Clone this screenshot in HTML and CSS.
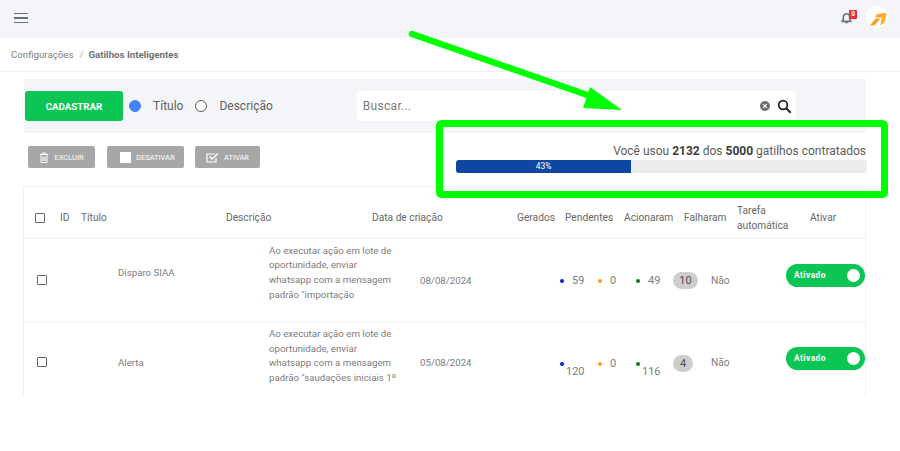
FILE: index.html
```
<!DOCTYPE html>
<html lang="pt-BR">
<head>
<meta charset="utf-8">
<title>Gatilhos Inteligentes</title>
<link rel="stylesheet" href="styles.css">
</head>
<body>
<header class="topbar">
  <span class="menu"><i></i><i></i><i></i></span>
  <div class="top-actions">
    <span class="bell">
      <svg width="11" height="12" viewBox="0 0 14 14"><path d="M7 1.500a4 4 0 0 0-4 4v3L1.500 10.500v.8h11v-.8L11 8.500v-3a4 4 0 0 0-4-4z" fill="none" stroke="#6d7278" stroke-width="2"/><circle cx="7" cy="12.400" r="1.500" fill="#6d7278"/></svg>
      <b class="badge">0</b>
    </span>
    <span class="brand">
      <svg width="22" height="22" viewBox="0 0 22 22"><circle cx="11" cy="11" r="11" fill="#fff"/><path d="M10.500 8.200L20.500 6.800 18.600 16.500 14.200 19.500 15.800 11.600H9z" fill="#fbae2e"/><path d="M4 19.200L9.600 12.500H14.600L8.400 19.600z" fill="#f79f1f"/></svg>
    </span>
  </div>
</header>

<nav class="crumbs">
  <span>Configurações</span><span class="sep">/</span><strong>Gatilhos Inteligentes</strong>
</nav>

<main class="content">
  <section class="filters">
    <button class="primary">CADASTRAR</button>
    <div class="radios">
      <span class="radio on"></span><span class="radio-label">Título</span>
      <span class="radio"></span><span class="radio-label">Descrição</span>
    </div>
    <div class="search">
      <span class="placeholder">Buscar...</span>
      <svg class="clear" width="10" height="10" viewBox="0 0 10 10"><circle cx="5" cy="5" r="5" fill="#6e6e6e"/><path d="M3.200 3.200l3.600 3.600M6.800 3.200l-3.600 3.600" stroke="#fff" stroke-width="1.200"/></svg>
      <svg class="lens" width="15" height="15" viewBox="0 0 15 15"><circle cx="6" cy="6" r="4.300" fill="none" stroke="#222" stroke-width="1.700"/><path d="M9.200 9.200l4.500 4.500" stroke="#222" stroke-width="2"/></svg>
    </div>
  </section>

  <section class="actions">
    <div class="bulk">
      <button class="muted btn-excluir">
        <svg width="10" height="11" viewBox="0 0 10 11"><path d="M1 2.500h8M3.500 2.500V1h3v1.500M2 3.500v7h6v-7" fill="none" stroke="#fff" stroke-width="1"/><path d="M4 4.500v4.500M6 4.500v4.500" stroke="#fff"/></svg>
        EXCLUIR
      </button>
      <button class="muted btn-desativar"><span class="square"></span>DESATIVAR</button>
      <button class="muted btn-ativar">
        <svg width="13" height="11" viewBox="0 0 13 11"><path d="M10 6v4H1V2h8" fill="none" stroke="#fff" stroke-width="1.200"/><path d="M3.500 4.500l2.500 2.500 6-5.500" fill="none" stroke="#fff" stroke-width="1.500"/></svg>
        ATIVAR
      </button>
    </div>
    <div class="usage">
      <p>Você usou <b>2132</b> dos <b>5000</b> gatilhos contratados</p>
      <div class="track"><div class="fill" style="width:42.600%">43%</div></div>
    </div>
  </section>

  <section class="panel">
    <div class="head">
      <span class="box"></span>
      <span>ID</span>
      <span>Título</span>
      <span>Descrição</span>
      <span>Data de criação</span>
      <span>Gerados</span>
      <span>Pendentes</span>
      <span>Acionaram</span>
      <span>Falharam</span>
      <span class="wrap">Tarefa automática</span>
      <span class="last">Ativar</span>
    </div>

    <div class="row">
      <span class="box"></span>
      <span class="name">Disparo SIAA</span>
      <p class="desc">Ao executar ação em lote de oportunidade, enviar whatsapp com a mensagem padrão "importação</p>
      <span class="date">08/08/2024</span>
      <div class="counts">
        <span class="count c-pend"><i class="dot blue"></i>59</span>
        <span class="count c-zero"><i class="dot orange"></i>0</span>
        <span class="count c-acio"><i class="dot green"></i>49</span>
      </div>
      <span class="pill">10</span>
      <span class="no">Não</span>
      <span class="toggle">Ativado<i></i></span>
    </div>

    <div class="row second">
      <span class="box"></span>
      <span class="name">Alerta</span>
      <p class="desc">Ao executar ação em lote de oportunidade, enviar whatsapp com a mensagem padrão "saudações iniciais 1º</p>
      <span class="date">05/08/2024</span>
      <div class="counts">
        <span class="count c-pend stacked"><i class="dot blue"></i>120</span>
        <span class="count c-zero"><i class="dot orange"></i>0</span>
        <span class="count c-acio stacked"><i class="dot green"></i>116</span>
      </div>
      <span class="pill round">4</span>
      <span class="no">Não</span>
      <span class="toggle">Ativado<i></i></span>
    </div>
  </section>
</main>

<!-- Callout drawn over the page: arrow pointing down to the usage frame -->
<svg class="callout" width="900" height="451" viewBox="0 0 900 451">
  <path d="M412 34L596 98" fill="none" stroke="#00ff00" stroke-width="6.500" stroke-linecap="round"/>
  <path d="M590 87L622 110 583 108z" fill="#00ff00"/>
  <rect x="439.500" y="123.500" width="445" height="71" rx="2" fill="none" stroke="#00ff00" stroke-width="7"/>
</svg>
</body>
</html>
```
FILE: styles.css
```
* { box-sizing: border-box; }

html, body { margin: 0; height: 100%; }

body {
  position: relative;
  width: 900px;
  height: 451px;
  overflow: hidden;
  background: #fff;
  font-family: Roboto, "Liberation Sans", sans-serif;
  color: #6f6f6f;
}

button { font-family: inherit; border: 0; cursor: pointer; }

/* top bar */
.topbar {
  height: 38px;
  background: #f3f5f9;
  display: flex;
  align-items: center;
  justify-content: space-between;
  padding: 0 12px 2px 14px;
}

.menu { display: flex; flex-direction: column; gap: 3px; }
.menu i { display: block; width: 14px; height: 1.500px; background: #6b6f75; }

.top-actions { display: flex; align-items: center; gap: 10px; }

.bell { position: relative; display: block; width: 15px; height: 12px; }
.bell svg { display: block; }

.badge {
  position: absolute;
  top: -2px;
  left: 8px;
  width: 8px;
  height: 9px;
  background: #ee2b47;
  border-radius: 1px;
  color: #fff;
  font-size: 6.500px;
  line-height: 9px;
  text-align: center;
}

.brand { display: block; width: 22px; height: 22px; margin-bottom: 2px; }
.brand svg { display: block; }

/* breadcrumb */
.crumbs {
  height: 34px;
  padding: 0 11px;
  display: flex;
  align-items: center;
  font-size: 9.700px;
  color: #7d7d7d;
  border-bottom: 1px solid #f0f0f0;
}
.crumbs .sep { margin: 0 5px 0 6px; color: #a9a9a9; }
.crumbs strong { font-weight: 700; color: #6f6f6f; }

/* page body */
.content { padding: 7px 34px 0 24px; }

/* filter strip */
.filters {
  height: 54px;
  background: #f3f5f9;
  display: flex;
  align-items: center;
}

.primary {
  width: 98px;
  height: 30px;
  margin: 0 0 0 1px;
  background: #0bc655;
  color: #fff;
  border-radius: 3px;
  font-size: 9.700px;
  font-weight: 700;
  padding: 0;
}

.radios { display: flex; align-items: center; margin-left: 6px; font-size: 12px; color: #5f5f5f; }
.radio { width: 12px; height: 12px; border-radius: 50%; border: 1px solid #5b5b5b; background: #fff; }
.radio.on { background: #4483f4; border-color: #4483f4; }
.radio-label { margin: 0 12px 0 12px; }

.search {
  margin-left: 72px;
  width: 439px;
  height: 30px;
  background: #fff;
  display: flex;
  align-items: center;
  padding: 0 4px 0 6px;
  font-size: 12px;
  letter-spacing: .3px;
  color: #7c7c7c;
}
.placeholder { flex: 1; }
.clear { margin-right: 7px; }

/* bulk buttons and usage meter */
.actions {
  display: flex;
  justify-content: space-between;
  height: 53px;
  padding: 13px 0 0 4px;
}

.bulk { display: flex; gap: 12px; height: 22px; }

.muted {
  height: 22px;
  background: #a7a7a7;
  color: #fff;
  border-radius: 2px;
  font-size: 7.500px;
  display: flex;
  align-items: center;
  justify-content: center;
  padding: 0;
  gap: 5px;
}
.btn-excluir { width: 67px; }
.btn-desativar { width: 77px; justify-content: flex-start; padding-left: 13px; gap: 5px; }
.btn-ativar { width: 65px; margin-left: -1px; }
.square { width: 11px; height: 11px; background: #fff; }

.usage { width: 411px; margin-right: -1px; }
.usage p {
  margin: 0 1px 1px 0;
  height: 13px;
  text-align: right;
  font-size: 12px;
  line-height: 10px;
  color: #5c5c5c;
}
.usage b { color: #3c3c3c; }

.track { height: 13px; background: #ececec; border-radius: 3px; overflow: hidden; }
.fill {
  height: 100%;
  background: #0d47a1;
  color: #fff;
  font-size: 8.500px;
  line-height: 13px;
  text-align: center;
}

/* table card */
.panel {
  height: 209px;
  margin-left: -1px;
  border: 1px solid #f0f0f0;
  border-bottom: 0;
  overflow: hidden;
}

.head, .row {
  display: grid;
  align-items: center;
}

.head {
  margin-top: 10px;
  height: 42px;
  padding-left: 11px;
  grid-template-columns: 25px 21px 145px 146px 145px 48px 59px 60px 53px 73px 1fr;
  border-bottom: 1px solid #f5f5f5;
  font-size: 10.200px;
  color: #666;
}
.head .wrap { width: 56px; line-height: 15px; }

.box {
  display: block;
  width: 10px;
  height: 10px;
  border: 1px solid #666;
  border-radius: 1px;
  background: #fff;
}

.row {
  height: 84px;
  padding-left: 13px;
  grid-template-columns: 81px 151px 151px 140px 113px 38px 75px 1fr;
  border-bottom: 1px solid #f5f5f5;
  font-size: 9.700px;
  color: #7c7c7c;
}
.row .box { margin-top: -2px; }
.row .name { margin-top: -16px; }
.row .desc { margin-top: -15px; }
.row .no { font-size: 10.200px; }
.row.second { height: 72px; border-bottom: 0; align-items: start; padding-top: 4px; }
.row.second .box { margin-top: 30px; }
.row.second .name { margin-top: 30px; }
.row.second .desc { margin-top: 0; }
.row.second .date { margin-top: 30px; }
.row.second .counts { margin-top: 30px; }
.row.second .pill { margin-top: 28px; }
.row.second .no { margin-top: 30px; }
.row.second .toggle { margin-top: 20px; }

.desc { margin: 0; width: 128px; line-height: 14.700px; }

.counts { display: flex; align-items: flex-start; position: relative; height: 14px; font-size: 11px; }
.count { position: relative; display: block; white-space: nowrap; padding-left: 12px; line-height: 14px; }
.c-pend { width: 38px; }
.c-zero { width: 38px; }
.c-acio { width: 37px; }
.count.stacked { padding-left: 6px; padding-top: 8px; }
.dot { position: absolute; left: 0; top: 5px; width: 4px; height: 4px; border-radius: 50%; }
.blue { background: #0a1ee0; }
.orange { background: #fb9f1c; }
.green { background: #0a7a16; }

.pill {
  justify-self: start;
  height: 17px;
  min-width: 25px;
  padding: 0 6px;
  border-radius: 9px;
  background: #cdcdcd;
  color: #4f4f4f;
  font-size: 11px;
  line-height: 17px;
  text-align: center;
}
.pill.round { min-width: 20px; padding: 0; }

.toggle {
  position: relative;
  display: block;
  width: 79px;
  height: 23px;
  margin-top: -10px;
  border-radius: 12px;
  background: #0bc655;
  color: #fff;
  font-size: 8.300px;
  font-weight: 700;
  line-height: 22px;
  letter-spacing: .5px;
  padding-left: 8px;
}
.toggle i {
  position: absolute;
  right: 5px;
  top: 5px;
  width: 13px;
  height: 13px;
  border-radius: 50%;
  background: #fff;
}

/* callout layer */
.callout { position: absolute; left: 0; top: 0; pointer-events: none; }
```
